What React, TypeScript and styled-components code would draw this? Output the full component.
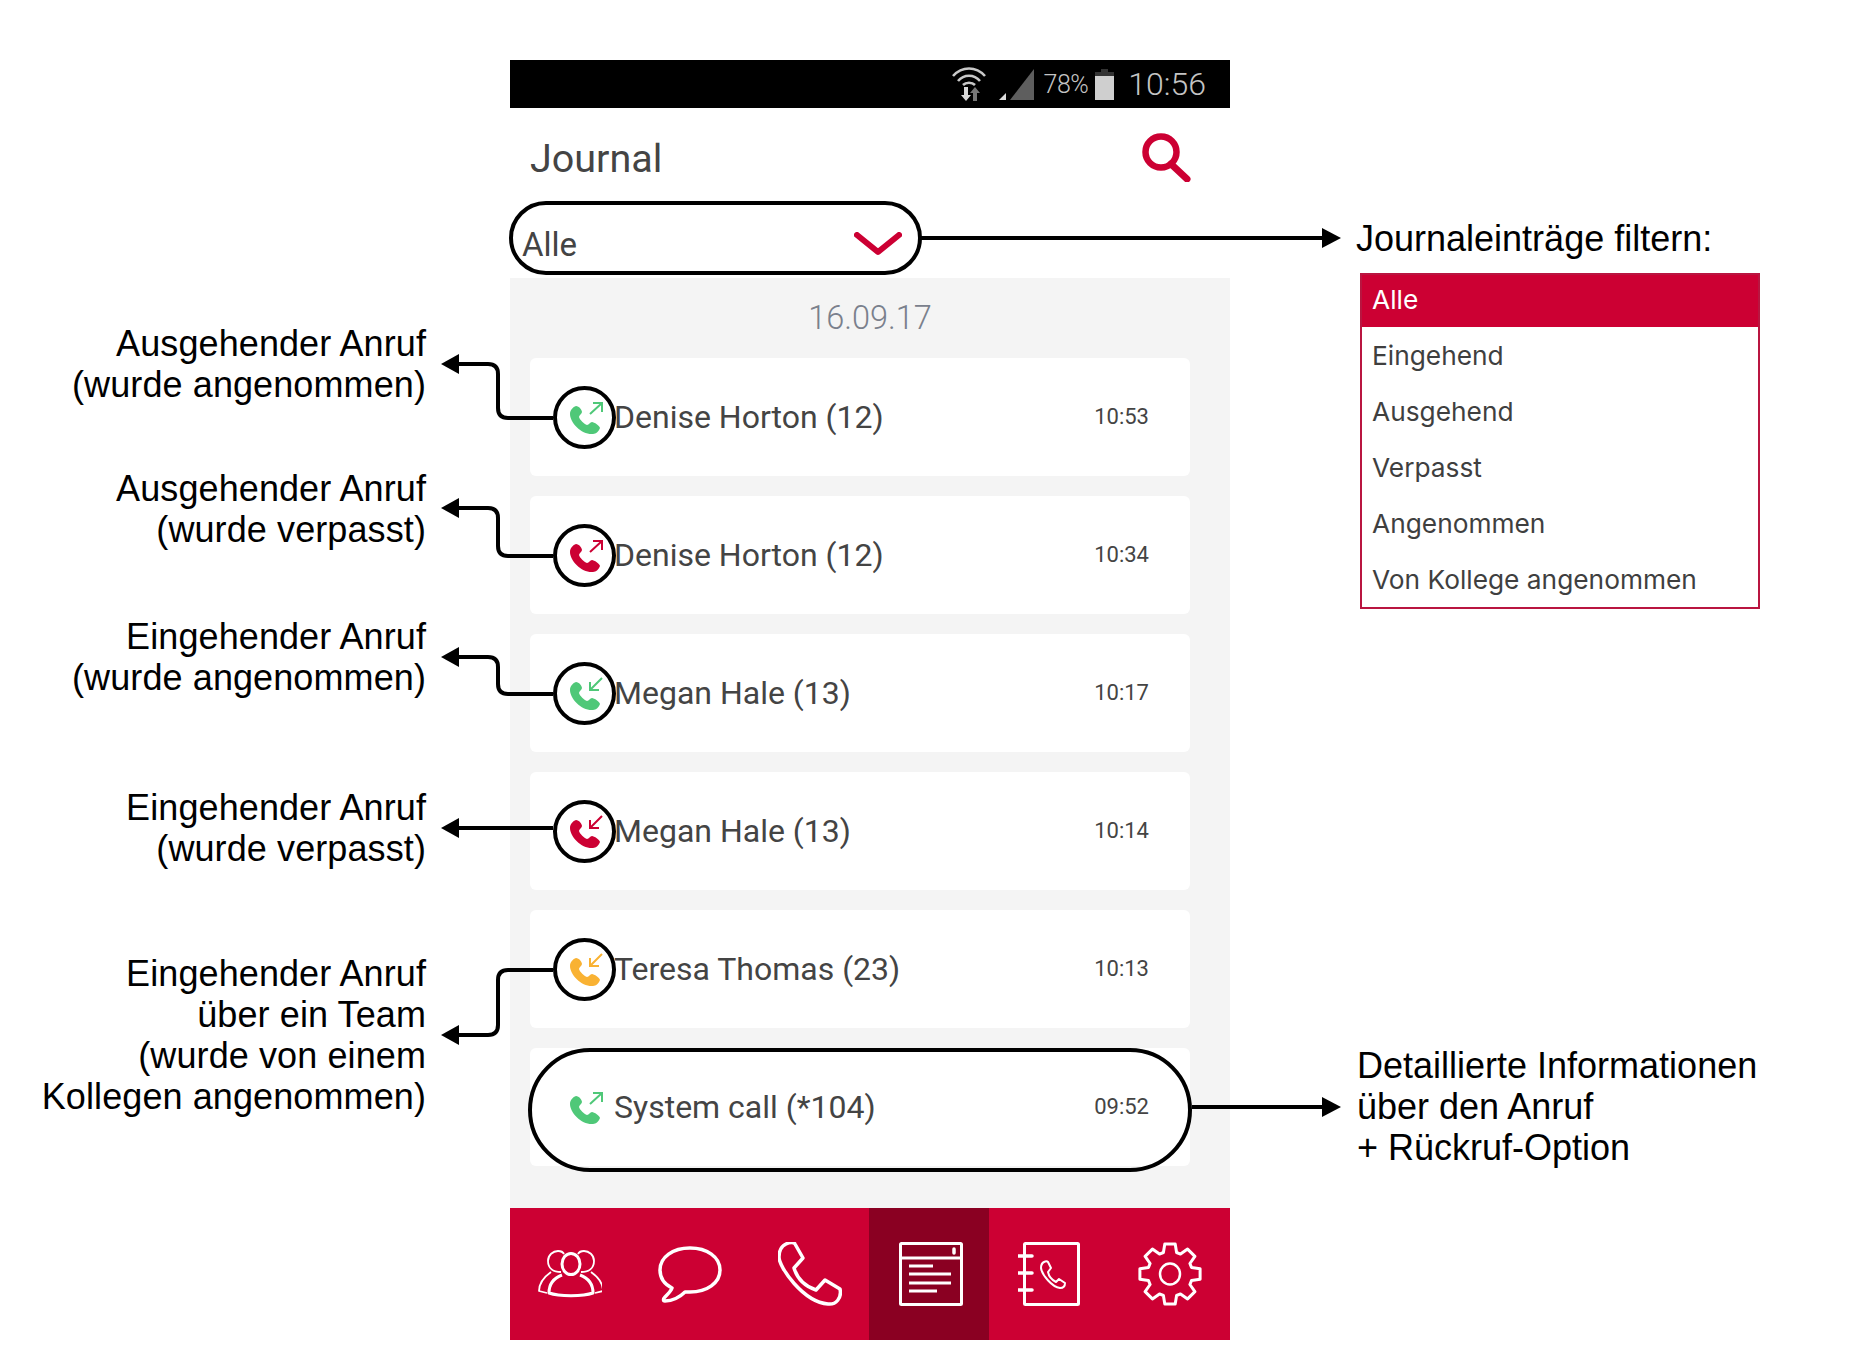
import React from 'react';
import styled, { createGlobalStyle } from 'styled-components';

const CRIMSON = '#cc0033';
const GREEN = '#4fc878';
const AMBER = '#f9b233';

const GlobalStyle = createGlobalStyle`
  html, body {
    margin: 0;
    padding: 0;
    background: #fff;
  }
`;

type Direction = 'out' | 'in';

const calls: {
  name: string;
  time: string;
  color: string;
  dir: Direction;
  plain?: boolean;
}[] = [
  { name: 'Denise Horton (12)', time: '10:53', color: GREEN, dir: 'out' },
  { name: 'Denise Horton (12)', time: '10:34', color: CRIMSON, dir: 'out' },
  { name: 'Megan Hale (13)', time: '10:17', color: GREEN, dir: 'in' },
  { name: 'Megan Hale (13)', time: '10:14', color: CRIMSON, dir: 'in' },
  { name: 'Teresa Thomas (23)', time: '10:13', color: AMBER, dir: 'in' },
  { name: 'System call (*104)', time: '09:52', color: GREEN, dir: 'out', plain: true },
];

const callouts = [
  { gap: 323, lines: ['Ausgehender Anruf', '(wurde angenommen)'] },
  { gap: 63, lines: ['Ausgehender Anruf', '(wurde verpasst)'] },
  { gap: 66, lines: ['Eingehender Anruf', '(wurde angenommen)'] },
  { gap: 89, lines: ['Eingehender Anruf', '(wurde verpasst)'] },
  {
    gap: 84,
    lines: ['Eingehender Anruf', 'über ein Team', '(wurde von einem', 'Kollegen angenommen)'],
  },
];

const filters = ['Alle', 'Eingehend', 'Ausgehend', 'Verpasst', 'Angenommen', 'Von Kollege angenommen'];

const connectors = [
  'M553 418 H508 Q498 418 498 408 V374 Q498 364 488 364 H456',
  'M553 556 H508 Q498 556 498 546 V518 Q498 508 488 508 H456',
  'M553 694 H508 Q498 694 498 684 V667 Q498 657 488 657 H456',
  'M553 828 H456',
  'M553 970 H508 Q498 970 498 980 V1025 Q498 1035 488 1035 H456',
  'M921 238 H1324',
  'M1192 1107 H1324',
];

const leftHeads = [364, 508, 657, 828, 1035];
const rightHeads = [238, 1107];

const gearPath = () => {
  const pts: string[] = [];
  for (let i = 0; i < 8; i++) {
    const a = (i * Math.PI) / 4 - Math.PI / 2;
    [
      [-0.3, 22.5],
      [-0.17, 30.5],
      [0.17, 30.5],
      [0.3, 22.5],
    ].forEach(([off, r]) => {
      const x = 32 + r * Math.cos(a + off);
      const y = 32 + r * Math.sin(a + off);
      pts.push(`${x.toFixed(1)} ${y.toFixed(1)}`);
    });
  }
  return `M${pts.join(' L')} Z`;
};

const CallIcon = ({ color, dir }: { color: string; dir: Direction }) => (
  <svg width="55" height="55" viewBox="4 4 55 55">
    <path
      transform="translate(17 19)"
      fill={color}
      d="M6 1C3 2 0 5 0 9C0 18 12 30 23 29C26 29 29 26 30 23C30 21 24 17 22 17C20 17 19 20 17 20C14 19 10 15 9 12C9 10 12 9 12 7C12 5 9 1 6 1Z"
    />
    <path
      fill="none"
      stroke={color}
      strokeWidth="2"
      d={dir === 'out' ? 'M37 28L49 17M40 17H49V26' : 'M49 16L37 28M37 20V28H46'}
    />
  </svg>
);

const TeamIcon = () => (
  <NavSvg viewBox="0 0 64 64">
    <g transform="translate(1 8)">
      <ellipse cx="32" cy="14" rx="9" ry="10.500" strokeWidth="3" />
      <path strokeWidth="3" d="M23 25C15 28 10 34 10 43C20 46.500 44 46.500 54 43C54 34 49 28 41 25" />
      <path strokeWidth="1.800" d="M22 22C15 22 9 19 9 11C9 5 14 1 19 1C22 1 24 2 25 4" />
      <path strokeWidth="1.800" d="M42 22C49 22 55 19 55 11C55 5 50 1 45 1C42 1 40 2 39 4" />
      <path strokeWidth="1.800" d="M12 22C5 27 0 33 0 41L8 43" />
      <path strokeWidth="1.800" d="M52 22C59 27 64 33 64 41L56 43" />
    </g>
  </NavSvg>
);

const ChatIcon = () => (
  <NavSvg viewBox="0 0 64 64" strokeWidth="3.500">
    <path
      transform="translate(0 4)"
      d="M14 42C6 38 2 31 2 24C2 11 15 2 32 2C49 2 62 11 62 24C62 37 49 46 32 46C30 46 29 46 27 46C22 51 14 55 7 55C5 55 5 53 7 51C10 48 13 45 14 42Z"
    />
  </NavSvg>
);

const PhoneIcon = () => (
  <NavSvg viewBox="0 0 64 64" strokeWidth="3.500">
    <path d="M8 2C12 0 16 0 17 2L25 16L16 26C19 36 26 44 38 48L47 38L62 47C64 56 58 63 50 62C25 60 1 25 1 15C1 8 4 4 8 2Z" />
  </NavSvg>
);

const JournalIcon = () => (
  <NavSvg viewBox="0 0 64 64" strokeWidth="3">
    <rect x="1.500" y="1.500" width="61" height="61" rx="1" />
    <path d="M1.500 16H62.500M10 24H34M10 32H52M10 41H52M10 49H38" />
    <path d="M55 7V11" strokeWidth="3.500" strokeLinecap="round" />
  </NavSvg>
);

const BookIcon = () => (
  <NavSvg viewBox="0 0 64 64" strokeWidth="3">
    <rect x="6.500" y="1.500" width="54" height="61" rx="1" />
    <path d="M0 14H14M0 31H14M0 48H14" strokeWidth="3.500" strokeLinecap="round" />
    <path
      strokeWidth="2"
      d="M26 20C28 19 29 19 30 20L33 26L30 30C31 35 34 38 38 40L41 37L47 41C47 44 45 46 42 46C34 45 24 33 23 26C23 23 24 21 26 20Z"
    />
  </NavSvg>
);

const GearIcon = () => (
  <NavSvg viewBox="0 0 64 64" strokeWidth="3">
    <path d={gearPath()} />
    <ellipse cx="32" cy="32" rx="10" ry="10.500" strokeWidth="2.500" />
  </NavSvg>
);

const navIcons = [TeamIcon, ChatIcon, PhoneIcon, JournalIcon, BookIcon, GearIcon];

const App = () => (
  <Page>
    <GlobalStyle />
    <LeftColumn>
      {callouts.map((c) => (
        <Callout key={c.lines.join()} $gap={c.gap}>
          {c.lines.map((l) => (
            <div key={l}>{l}</div>
          ))}
        </Callout>
      ))}
    </LeftColumn>

    <Phone>
      <StatusBar>
        <svg width="34" height="34" viewBox="0 0 34 34">
          <path
            d="M1 9C10 -1 24 -1 33 9M6 14C12 7 22 7 28 14M11 18C14 15 20 15 23 18"
            fill="none"
            stroke="#c8c8c8"
            strokeWidth="2.600"
          />
          <path d="M12 20H16V28H19L14 34L9 28H12Z" fill="#d8d8d8" />
          <path d="M21 34V26H18L23 20L28 26H25V34Z" fill="#777" />
        </svg>
        <SignalIcon width="36" height="32" viewBox="0 0 36 32">
          <path d="M12 32L36 1V32Z" fill="#5e5e5e" />
          <path d="M1 32L8 25V32Z" fill="#ddd" />
        </SignalIcon>
        <BatteryText>78%</BatteryText>
        <BatteryIcon width="19" height="31" viewBox="0 0 19 31">
          <path d="M6 0H13V3H19V31H0V3H6Z" fill="#333" />
          <path d="M0 7H19V31H0Z" fill="#cfcfcf" />
        </BatteryIcon>
        <Clock>10:56</Clock>
      </StatusBar>

      <Header>
        <Title>Journal</Title>
        <svg width="50" height="50" viewBox="0 0 50 50">
          <circle cx="20" cy="20" r="15.500" fill="none" stroke={CRIMSON} strokeWidth="6.500" />
          <path d="M30 32L46 47" stroke={CRIMSON} strokeWidth="7" strokeLinecap="round" />
        </svg>
      </Header>

      <FilterPill>
        <FilterValue>Alle</FilterValue>
        <svg width="48" height="24" viewBox="0 0 48 24">
          <path
            d="M3 3L24 20L45 3"
            fill="none"
            stroke={CRIMSON}
            strokeWidth="6"
            strokeLinecap="round"
            strokeLinejoin="round"
          />
        </svg>
      </FilterPill>

      <Panel>
        <DateLabel>16.09.17</DateLabel>
        <CardList>
          {calls.map((c) => (
            <Card key={c.time} $outlined={!!c.plain}>
              <Badge $plain={!!c.plain}>
                <CallIcon color={c.color} dir={c.dir} />
              </Badge>
              <Name>{c.name}</Name>
              <Time>{c.time}</Time>
            </Card>
          ))}
        </CardList>
      </Panel>

      <NavBar>
        {navIcons.map((Icon, i) => (
          <NavItem key={i} $active={i === 3}>
            <Icon />
          </NavItem>
        ))}
      </NavBar>
    </Phone>

    <RightColumn>
      <FilterHeading>Journaleinträge filtern:</FilterHeading>
      <FilterList>
        {filters.map((f, i) => (
          <FilterOption key={f} $selected={i === 0}>
            {f}
          </FilterOption>
        ))}
      </FilterList>
      <DetailNote>
        <div>Detaillierte Informationen</div>
        <div>über den Anruf</div>
        <div>+ Rückruf-Option</div>
      </DetailNote>
    </RightColumn>

    <Connectors viewBox="0 0 1869 1360">
      {connectors.map((d) => (
        <path key={d} d={d} fill="none" stroke="#000" strokeWidth="4" />
      ))}
      {leftHeads.map((y) => (
        <path key={y} d={`M441 ${y}L459 ${y - 10}V${y + 10}Z`} />
      ))}
      {rightHeads.map((y) => (
        <path key={y} d={`M1341 ${y}L1322 ${y - 10}V${y + 10}Z`} />
      ))}
    </Connectors>
  </Page>
);

export default App;

const Page = styled.div`
  position: relative;
  display: grid;
  grid-template-columns: 510px 720px 1fr;
  width: 1869px;
  height: 1360px;
  overflow: hidden;
  background: #fff;
`;

const LeftColumn = styled.div`
  display: flex;
  flex-direction: column;
  align-items: flex-end;
  padding-right: 84px;
`;

const Callout = styled.div<{ $gap: number }>`
  margin-top: ${(p) => p.$gap}px;
  font-family: 'Liberation Sans', Arial, sans-serif;
  font-size: 36px;
  line-height: 41px;
  letter-spacing: 0.1px;
  color: #000;
  text-align: right;
  white-space: nowrap;
`;

const Phone = styled.div`
  display: flex;
  flex-direction: column;
  margin-top: 60px;
  font-family: Roboto, sans-serif;
`;

const StatusBar = styled.div`
  display: flex;
  align-items: center;
  justify-content: flex-end;
  height: 48px;
  padding-right: 24px;
  background: #000;
  color: #c4c4c4;
`;

const SignalIcon = styled.svg`
  margin-left: 12px;
  margin-right: 10px;
`;

const BatteryText = styled.span`
  font-size: 25px;
  font-weight: 300;
  letter-spacing: -0.5px;
`;

const BatteryIcon = styled.svg`
  margin-left: 7px;
  margin-right: 14px;
`;

const Clock = styled.span`
  font-size: 32px;
  font-weight: 300;
`;

const Header = styled.div`
  display: flex;
  align-items: center;
  justify-content: space-between;
  box-sizing: border-box;
  height: 93px;
  padding: 10px 39px 6px 20px;
`;

const Title = styled.h1`
  margin: 0;
  padding-top: 4px;
  font-size: 39.500px;
  font-weight: 400;
  color: #444;
`;

const FilterPill = styled.div`
  display: flex;
  align-items: center;
  justify-content: space-between;
  box-sizing: border-box;
  width: 413px;
  height: 74px;
  margin-left: -1px;
  padding: 12px 16px 0 9px;
  border: 4px solid #000;
  border-radius: 37px;
`;

const FilterValue = styled.span`
  font-size: 33px;
  color: #444;
`;

const Panel = styled.div`
  display: flex;
  flex-direction: column;
  margin-top: 3px;
  padding: 0 40px 42px 20px;
  background: #f4f4f4;
`;

const DateLabel = styled.div`
  height: 80px;
  padding-left: 20px;
  font-size: 32.500px;
  font-weight: 300;
  line-height: 80px;
  text-align: center;
  color: #7a808c;
`;

const CardList = styled.div`
  display: flex;
  flex-direction: column;
  gap: 20px;
`;

const Card = styled.div<{ $outlined: boolean }>`
  position: relative;
  display: flex;
  align-items: center;
  height: 118px;
  padding: 0 41px 0 23px;
  background: #fff;
  border-radius: 6px;

  ${(p) =>
    p.$outlined &&
    `
    &::after {
      content: '';
      position: absolute;
      top: 0;
      right: -2px;
      bottom: -6px;
      left: -2px;
      border: 4px solid #000;
      border-radius: 62px;
    }
  `}
`;

const Badge = styled.div<{ $plain: boolean }>`
  display: flex;
  box-sizing: border-box;
  width: 63px;
  height: 63px;
  border: 4px solid ${(p) => (p.$plain ? 'transparent' : '#000')};
  border-radius: 50%;
  background: #fff;
`;

const Name = styled.span`
  flex: 1;
  margin-left: -2px;
  font-size: 32px;
  color: #444;
`;

const Time = styled.span`
  padding-bottom: 2px;
  font-size: 22px;
  color: #444;
`;

const NavBar = styled.div`
  display: grid;
  grid-template-columns: 120px 120px 119px 120px 121px 120px;
  height: 132px;
  background: ${CRIMSON};
`;

const NavItem = styled.div<{ $active: boolean }>`
  display: flex;
  align-items: center;
  justify-content: center;
  padding-left: ${(p) => (p.$active ? 3 : 0)}px;
  background: ${(p) => (p.$active ? '#8a0022' : 'transparent')};
`;

const NavSvg = styled.svg`
  width: 64px;
  height: 64px;
  fill: none;
  stroke: #fff;
  stroke-linejoin: round;
`;

const RightColumn = styled.div`
  display: flex;
  flex-direction: column;
  padding-left: 126px;
  font-family: 'Liberation Sans', Arial, sans-serif;
  color: #000;
`;

const FilterHeading = styled.div`
  margin-top: 218px;
  font-size: 36px;
  line-height: 41px;
`;

const FilterList = styled.div`
  display: flex;
  flex-direction: column;
  box-sizing: border-box;
  width: 400px;
  height: 336px;
  margin-top: 14px;
  margin-left: 4px;
  border: 2px solid #b91540;
  font-family: Inter, Roboto, sans-serif;
`;

const FilterOption = styled.div<{ $selected: boolean }>`
  box-sizing: border-box;
  height: ${(p) => (p.$selected ? 54 : 56)}px;
  padding-left: 10px;
  font-size: 26.300px;
  line-height: ${(p) => (p.$selected ? 50 : 57)}px;
  color: ${(p) => (p.$selected ? '#fff' : '#3f3f3f')};
  background: ${(p) => (p.$selected ? CRIMSON : 'transparent')};
`;

const DetailNote = styled.div`
  margin-top: 436px;
  margin-left: 1px;
  font-size: 36px;
  line-height: 41px;
  white-space: nowrap;
`;

const Connectors = styled.svg`
  position: absolute;
  top: 0;
  left: 0;
  width: 1869px;
  height: 1360px;
  pointer-events: none;
`;
